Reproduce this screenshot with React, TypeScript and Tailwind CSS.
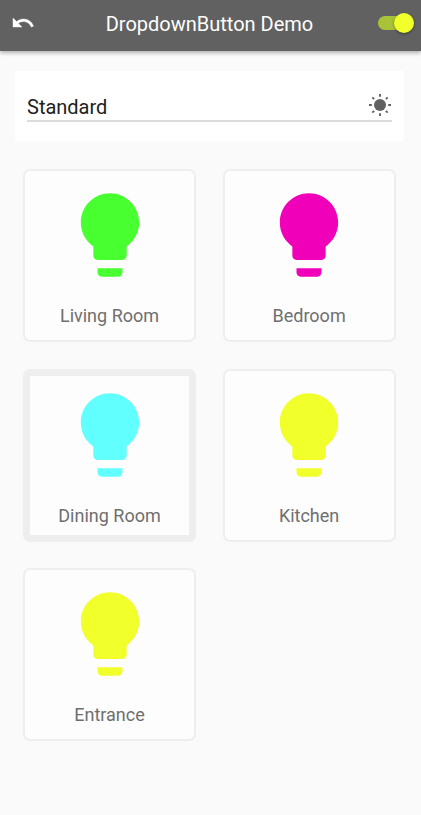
const rooms = [
  { name: "Living Room", color: "#48ff30", selected: false },
  { name: "Bedroom", color: "#f000b8", selected: false },
  { name: "Dining Room", color: "#62ffff", selected: true },
  { name: "Kitchen", color: "#f1ff2b", selected: false },
  { name: "Entrance", color: "#f1ff2b", selected: false },
];

const UndoIcon = () => (
  <svg viewBox="0 0 24 24" className="w-6 h-6" fill="currentColor" stroke="currentColor" strokeWidth="0.4">
    <path d="M12.5 8c-2.65 0-5.05.99-6.9 2.6L2 7v9h9l-3.62-3.62c1.39-1.16 3.16-1.88 5.12-1.88 3.54 0 6.55 2.31 7.6 5.5l2.37-.78C21.08 11.03 17.15 8 12.5 8z" />
  </svg>
);

const SunIcon = () => (
  <svg viewBox="0 0 24 24" className="w-6 h-6 shrink-0 -mt-0.5" fill="#616161" stroke="#616161" strokeWidth="1.9">
    <circle cx="12" cy="12" r="6" stroke="none" />
    <path d="M12 1v2.8M12 20.2v2.8M1 12h2.8M20.2 12h2.8M4.3 4.3l1.8 1.8M17.9 17.9l1.8 1.8M4.3 19.7l1.8-1.8M17.9 6.1l1.8-1.8" />
  </svg>
);

const BulbIcon = ({ color }: { color: string }) => (
  <svg viewBox="0 0 24 24" className="w-[100px] h-[100px]" fill={color}>
    <path d="M9 21c0 .55.45 1 1 1h4c.55 0 1-.45 1-1v-1H9v1zm3-19C8.14 2 5 5.14 5 9c0 2.38 1.19 4.47 3 5.74V17c0 .55.45 1 1 1h6c.55 0 1-.45 1-1v-2.26c1.81-1.27 3-3.36 3-5.74 0-3.86-3.14-7-7-7z" />
  </svg>
);

const App = () => {
  return (
    <div className="min-h-[815px] bg-[#fafafa] font-['Roboto',sans-serif]">
      {/* App bar */}
      <header className="h-[51px] px-[11px] pb-[5px] grid grid-cols-[36px_1fr_36px] items-center bg-[#616161] text-white shadow-[0_2px_4px_rgba(0,0,0,0.3)]">
        <button aria-label="Back">
          <UndoIcon />
        </button>
        <h1 className="text-[20px] leading-6 text-center pt-0.5 pr-0.5">DropdownButton Demo</h1>
        <button
          role="switch"
          aria-checked="true"
          aria-label="Lights"
          className="w-[34px] h-3.5 -mr-0.5 justify-self-end flex items-center justify-end rounded-full bg-[#a9c338]"
        >
          <span className="w-5 h-5 -mr-0.5 shrink-0 rounded-full bg-[#f1ff2b] shadow-[0_1px_3px_rgba(0,0,0,0.4)]" />
        </button>
      </header>

      {/* Mode select */}
      <div className="h-[70px] mt-5 ml-[15px] mr-[17px] px-3 pt-[21px] bg-white">
        <div className="h-[30px] flex items-center justify-between border-b-2 border-[#dcdcdc] text-[#212121]">
          <span className="text-[20px] leading-6 pt-0.5">Standard</span>
          <SunIcon />
        </div>
      </div>

      {/* Rooms */}
      <main className="mt-7 ml-[23px] grid grid-cols-[173px_173px] gap-x-[26.6px] gap-y-[26.6px]">
        {rooms.map((room) => (
          <div
            key={room.name}
            className={`h-[173px] flex flex-col items-center rounded-[7px] bg-[#fdfdfd] ${
              room.selected ? "border-[7px] pt-[9px] border-[#eeeeee]" : "border-2 pt-3.5 border-[#eeeeee]"
            }`}
          >
            <BulbIcon color={room.color} />
            <span className="mt-[19px] text-[18px] leading-6 text-[#6f6f6f]">{room.name}</span>
          </div>
        ))}
      </main>
    </div>
  );
};

export default App;
